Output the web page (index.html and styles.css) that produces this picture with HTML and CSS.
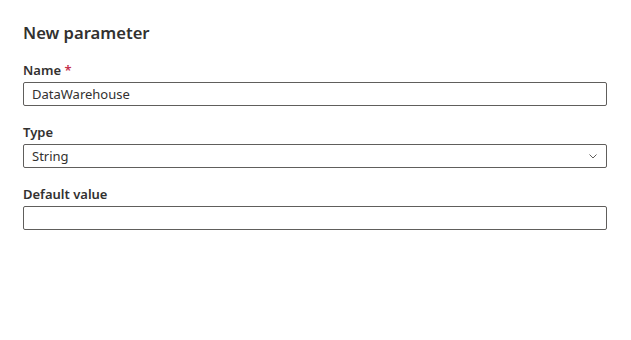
FILE: index.html
```html
<!DOCTYPE html>
<html lang="en">
<head>
  <meta charset="UTF-8">
  <meta name="viewport" content="width=device-width, initial-scale=1.0">
  <title>New parameter</title>
  <link rel="stylesheet" href="styles.css">
</head>
<body>
  <div class="panel">
    <h1>New parameter</h1>

    <div class="field">
      <label for="name">Name <span class="required">*</span></label>
      <input type="text" id="name" value="DataWarehouse">
    </div>

    <div class="field">
      <label for="type">Type</label>
      <div class="dropdown" id="type">
        <span>String</span>
        <svg class="chevron" width="12" height="12" viewBox="0 0 12 12">
          <path d="M2.5 4.5 L6 8 L9.5 4.5" fill="none" stroke="#605e5c" stroke-width="1"/>
        </svg>
      </div>
    </div>

    <div class="field">
      <label for="default">Default value</label>
      <input type="text" id="default">
    </div>
  </div>
</body>
</html>
```

FILE: styles.css
```css
* {
  box-sizing: border-box;
}

body {
  margin: 0;
  font-family: "Segoe UI", "Noto Sans", Arial, sans-serif;
  color: #323130;
  background: #fff;
}

.panel {
  padding: 21px 24px 0 23px;
}

h1 {
  margin: 0 0 15px;
  font-size: 16.6px;
  font-weight: 600;
  line-height: 24px;
  color: #323130;
}

.field {
  margin-bottom: 16px;
}

.field label {
  display: block;
  font-size: 13px;
  font-weight: 600;
  line-height: 20px;
  margin-bottom: 2px;
}

.required {
  color: #c4314b;
  font-weight: 600;
}

input[type="text"],
.dropdown {
  display: block;
  width: 100%;
  height: 24px;
  padding: 0 8px;
  border: 1px solid #605e5c;
  border-radius: 2px;
  font-family: inherit;
  font-size: 13px;
  color: #323130;
  background: #fff;
}

.dropdown {
  display: flex;
  align-items: center;
  justify-content: space-between;
  padding-right: 7px;
}

.chevron {
  display: block;
}
```
